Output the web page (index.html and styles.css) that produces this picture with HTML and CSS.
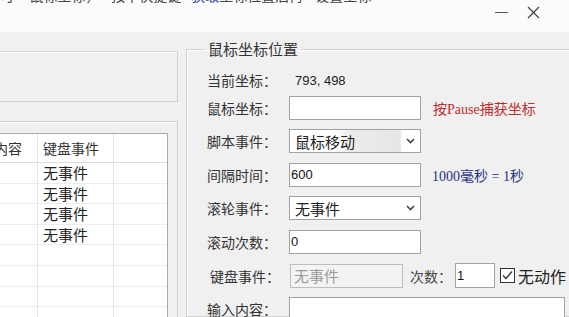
FILE: index.html
```html
<!DOCTYPE html>
<html lang="zh-CN">
  <head>
    <meta charset="UTF-8" />
    <meta name="viewport" content="width=device-width, initial-scale=1.0" />
    <title>鼠标坐标位置</title>
    <link rel="stylesheet" href="styles.css">
  </head>
  <body>
    <div class="titlebar">
      <div class="snippet">
        <div class="snippet-line">
          <span>可 </span><span class="gap">鼠标坐标，</span><span class="gap">按下快捷键</span><span class="link">获取</span><span>坐标位置后再</span><span class="gap">设置坐标</span>
        </div>
      </div>
      <div class="controls">
        <span class="min"></span>
        <svg class="close" width="13" height="13" viewBox="0 0 13 13">
          <path d="M1 1 L12 12 M12 1 L1 12" stroke="#444" stroke-width="1.2" fill="none" />
        </svg>
      </div>
    </div>

    <div class="panel">
      <div class="left">
        <div class="box top-box"></div>
        <div class="box list-box">
          <div class="list">
            <div class="list-head">
              <div class="col c1">输入内容</div>
              <div class="col c2">键盘事件</div>
              <div class="col c3"></div>
            </div>
            <div class="list-body">
              <div class="col c1"></div>
              <div class="col c2 events">
                <div>无事件</div>
                <div>无事件</div>
                <div>无事件</div>
                <div>无事件</div>
              </div>
              <div class="col c3"></div>
            </div>
          </div>
        </div>
      </div>

      <fieldset class="coords">
        <legend>鼠标坐标位置</legend>

        <div class="row first">
          <label>当前坐标：</label>
          <span class="value">793, 498</span>
        </div>

        <div class="row">
          <label>鼠标坐标：</label>
          <div class="input"></div>
          <span class="note red">按Pause捕获坐标</span>
        </div>

        <div class="row">
          <label>脚本事件：</label>
          <div class="input select hot">
            <span>鼠标移动</span>
            <svg width="9" height="6" viewBox="0 0 9 6"><path d="M1 1 L4.5 4.5 L8 1" stroke="#444" stroke-width="1.6" fill="none" /></svg>
          </div>
        </div>

        <div class="row">
          <label>间隔时间：</label>
          <div class="input"><span class="num">600</span></div>
          <span class="note blue">1000毫秒 = 1秒</span>
        </div>

        <div class="row">
          <label>滚轮事件：</label>
          <div class="input select">
            <span>无事件</span>
            <svg width="9" height="6" viewBox="0 0 9 6"><path d="M1 1 L4.5 4.5 L8 1" stroke="#444" stroke-width="1.6" fill="none" /></svg>
          </div>
        </div>

        <div class="row">
          <label>滚动次数：</label>
          <div class="input"><span class="num">0</span></div>
        </div>

        <div class="row keys">
          <label>键盘事件：</label>
          <div class="input disabled"><span>无事件</span></div>
          <span class="times">次数：</span>
          <div class="input small"><span class="num">1</span></div>
          <svg class="check" width="15" height="15" viewBox="0 0 15 15">
            <rect x="0.5" y="0.5" width="14" height="14" fill="#fff" stroke="#333" />
            <path d="M3 7.5 L6 10.5 L12 3.5" stroke="#333" stroke-width="1.4" fill="none" />
          </svg>
          <span class="check-label">无动作</span>
        </div>

        <div class="row">
          <label>输入内容：</label>
          <div class="input wide"></div>
        </div>
      </fieldset>
    </div>
  </body>
</html>
```

FILE: styles.css
```css
body {
  margin: 0;
  width: 569px;
  height: 317px;
  overflow: hidden;
  font-family: "Noto Sans CJK SC", sans-serif;
  color: #333;
  background-color: #fbfbfb;
}

/* Window title area */
.titlebar {
  height: 32px;
  background-color: #fbfbfb;
}

.snippet {
  height: 4px;
  overflow: hidden;
}

.snippet-line {
  margin-top: -14px;
  height: 18px;
  white-space: nowrap;
  font-size: 14px;
  line-height: 18px;
  color: #444;
}

.snippet .gap {
  margin-left: 12px;
}

.snippet .link {
  margin-left: 10px;
  color: #2233aa;
}

.controls {
  display: flex;
  justify-content: flex-end;
  align-items: center;
  gap: 19px;
  height: 14px;
  padding: 1px 29px 0 0;
}

.min {
  width: 13px;
  height: 1px;
  background-color: #555;
}

/* Main panel */
.panel {
  display: flex;
  height: 285px;
  background-color: #f0f0f0;
  overflow: hidden;
}

.left {
  flex: none;
  display: flex;
  flex-direction: column;
  width: 202px;
  margin-left: -24px;
}

.box {
  border: 1px solid #d2d2d2;
  box-shadow: inset 1px 1px 0 #fff;
}

.top-box {
  height: 49px;
  margin-top: 19px;
}

.list-box {
  flex: 1;
  margin-top: 19px;
  border-bottom: none;
  padding: 11px 9px 0 0;
}

.list {
  height: 100%;
  background-color: #fff;
  border: 1px solid #a9a9a9;
  border-bottom: none;
  display: flex;
  flex-direction: column;
}

.list-head {
  display: flex;
  height: 28px;
  border-bottom: 1px solid #dcdcdc;
  font-size: 14px;
  line-height: 28px;
}

.list-body {
  flex: 1;
  display: flex;
  background: repeating-linear-gradient(to bottom, transparent 0, transparent 19.6px, #ececec 19.6px, #ececec 20.6px);
}

.col {
  border-right: 1px solid #e6e6e6;
  white-space: nowrap;
  overflow: hidden;
}

.c1 {
  width: 59px;
  text-indent: -12px;
}

.c2 {
  width: 70px;
  padding-left: 5px;
}

.c3 {
  flex: 1;
  border-right: none;
}

.events {
  font-size: 15px;
  line-height: 20.6px;
  color: #222;
}

/* Mouse coordinate group */
.coords {
  flex: none;
  width: 400px;
  margin: 5px 0 0 8px;
  padding: 9px 0 0 20px;
  border: 1px solid #d2d2d2;
  box-shadow: inset 1px 1px 0 #fff;
  display: flex;
  flex-direction: column;
  gap: 9.6px;
}

.coords legend {
  margin-left: -2px;
  padding: 0 3px;
  font-size: 15px;
  line-height: 24px;
  color: #333;
}

.row {
  display: flex;
  align-items: center;
  height: 24px;
  font-size: 14px;
}

.row.first {
  height: 20px;
  margin-bottom: -4px;
}

.row label {
  flex: none;
  width: 82px;
}

.value {
  padding-left: 6px;
  font-family: "Liberation Sans", Arial, sans-serif;
  font-size: 13px;
  color: #222;
}

.input {
  flex: none;
  box-sizing: border-box;
  width: 132px;
  height: 24px;
  border: 1px solid #a2a2a2;
  background-color: #fff;
  display: flex;
  align-items: center;
}

.num {
  padding-left: 1px;
  font-family: "Liberation Sans", Arial, sans-serif;
  font-size: 13px;
  color: #111;
}

.select {
  justify-content: space-between;
  padding: 0 5px 0 5px;
  font-size: 15px;
  color: #222;
}

.select.hot {
  background: linear-gradient(to right, #fff 0, #fff 45px, #ececec 60px, #e6e6e6 110px, #fff 112px);
}

.note {
  margin-left: 12px;
  font-family: "Liberation Serif", "Noto Sans CJK SC", serif;
  font-size: 14px;
}

.red {
  color: #c42a2a;
}

.blue {
  margin-left: 11px;
  color: #25307e;
}

.keys label {
  width: 80px;
  padding-left: 3px;
}

.disabled {
  width: 113px;
  padding-left: 3px;
  background-color: #f3f3f3;
  border-color: #bdbdbd;
  color: #9a9a9a;
  font-size: 15px;
}

.times {
  margin-left: 7px;
  font-size: 14px;
  color: #444;
}

.small {
  width: 40px;
  height: 25px;
  margin-left: 3px;
}

.check {
  flex: none;
  margin-left: 5px;
}

.check-label {
  margin-left: 3px;
  font-size: 16px;
  white-space: nowrap;
  color: #222;
}

.wide {
  width: 276px;
}
```
